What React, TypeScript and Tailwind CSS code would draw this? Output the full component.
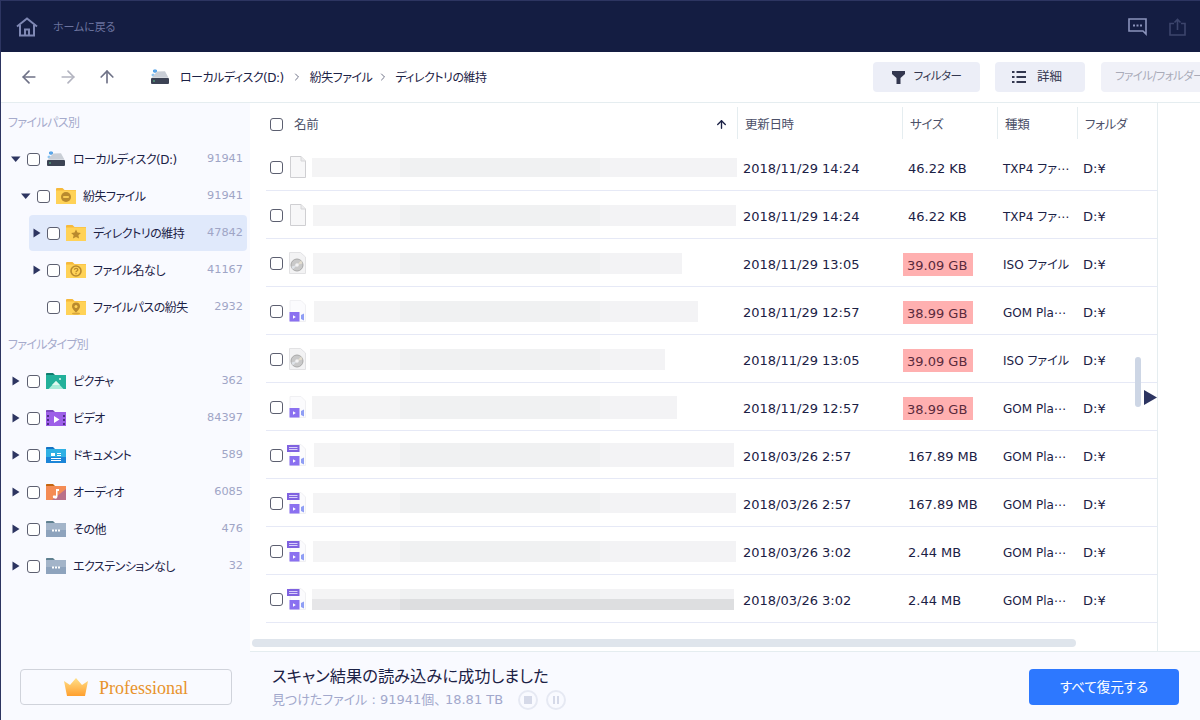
import { ArrowLeft, ArrowRight, ArrowUp, ChevronRight } from "lucide-react";
import type { ReactNode } from "react";

const Check = () => (
  <span className="block h-[13px] w-[13px] shrink-0 rounded-[3px] border border-[#5c5f70] bg-white" />
);

const Tri = ({ dir }: { dir: "down" | "right" | "none" }) => {
  if (dir === "none") return null;
  return (
    <svg width="10" height="10" viewBox="0 0 10 10" className="shrink-0">
      {dir === "down" ? <path d="M0 2.5h9.5L4.7 8z" fill="#2d3561" /> : <path d="M1.5 .5L8.5 5l-7 4.5z" fill="#2d3561" />}
    </svg>
  );
};

const Disk = () => (
  <svg width="20" height="18" viewBox="0 0 20 18" className="shrink-0">
    <path d="M5 1.2l2 .8v2L5 5 3 4V2z" fill="#5ba6e8" />
    <path d="M3 5.5l1.6.7v1.6L3 8.5 1.6 7.8V6.2z" fill="#8cc4f0" />
    <path d="M7 3.5l8-.2 3.5 6.5H1.5L5 6z" fill="#c9ced6" />
    <rect x="1" y="10" width="18" height="6" rx="1" fill="#3c4354" />
    <rect x="3" y="12.5" width="2" height="1" fill="#58c08a" />
  </svg>
);

const YellowFolder = ({ children }: { children: ReactNode }) => (
  <svg width="20" height="16" viewBox="0 0 20 16" className="shrink-0">
    <path d="M0 1.2C0 .5.5 0 1.2 0h5.3L8.5 2H20v2H0z" fill="#f6b93b" />
    <rect y="2.5" width="20" height="13.5" fill="#ffd257" />
    {children}
  </svg>
);

const MinusFolder = () => (
  <YellowFolder>
    <circle cx="10" cy="9" r="5" fill="#b98a2e" />
    <rect x="7.2" y="8.1" width="5.6" height="1.8" fill="#ffd257" />
  </YellowFolder>
);
const StarFolder = () => (
  <YellowFolder>
    <path d="M10 4.5l1.5 3.1 3.4.4-2.5 2.3.7 3.3-3.1-1.7-3.1 1.7.7-3.3L5.1 8l3.4-.4z" fill="#b98a2e" />
  </YellowFolder>
);
const HelpFolder = () => (
  <YellowFolder>
    <circle cx="10" cy="9" r="5" fill="none" stroke="#b98a2e" strokeWidth="1.6" />
    <path d="M8.4 7.8c.2-2 3.4-1.9 3.4 0 0 1.3-1.8 1.2-1.8 2.5" fill="none" stroke="#b98a2e" strokeWidth="1.3" />
    <rect x="9.4" y="11" width="1.2" height="1.2" fill="#b98a2e" />
  </YellowFolder>
);
const PinFolder = () => (
  <YellowFolder>
    <path d="M10 3.5a4 4 0 014 4c0 2.5-4 6-4 6s-4-3.500-4-6a4 4 0 014-4z" fill="#b98a2e" />
    <circle cx="10" cy="7.500" r="1.500" fill="#ffd257" />
    <ellipse cx="10" cy="14.500" rx="4" ry="1" fill="#d9a63c" />
  </YellowFolder>
);

const PictureFolder = () => (
  <svg width="20" height="16" viewBox="0 0 20 16" className="shrink-0">
    <path d="M0 1c0-.6.4-1 1-1h6l2 2h11v2H0z" fill="#0f7d6e" />
    <rect y="2" width="20" height="14" fill="#22b09a" />
    <path d="M2.500 16l7.500-8 7.500 8z" fill="#a9ecd9" />
    <path d="M6 12l4-4 4 4z" fill="#dff8ef" />
    <circle cx="14" cy="6" r="1" fill="#dff8ef" />
  </svg>
);
const VideoFolder = () => (
  <svg width="20" height="16" viewBox="0 0 20 16" className="shrink-0">
    <path d="M0 1c0-.6.4-1 1-1h6l2 2h11v2H0z" fill="#7c48bf" />
    <rect y="2" width="20" height="14" fill="#9d5fe8" />
    <path d="M1 5h2v2H1zm0 4h2v2H1zm0 4h2v2H1zm16-8h2v2h-2zm0 4h2v2h-2zm0 4h2v2h-2z" fill="#4e2d86" />
    <path d="M8 6l5.500 3.500L8 13z" fill="#fff" />
  </svg>
);
const DocFolder = () => (
  <svg width="20" height="16" viewBox="0 0 20 16" className="shrink-0">
    <path d="M0 1c0-.6.4-1 1-1h6l2 2h11v2H0z" fill="#1472c4" />
    <rect y="2" width="20" height="14" fill="#2fb0e4" />
    <rect y="10" width="20" height="6" fill="#1c85d8" />
    <path d="M5 6h4v3H5zm6 0h4v1h-4zm0 2h4v1h-4zm-6 3h10v1H5zm0 2h10v1H5z" fill="#fff" />
  </svg>
);
const AudioFolder = () => (
  <svg width="20" height="16" viewBox="0 0 20 16" className="shrink-0">
    <path d="M0 1c0-.6.4-1 1-1h6l2 2h11v2H0z" fill="#c4650f" />
    <rect y="2" width="20" height="14" fill="#f48c55" />
    <path d="M20 5v11H6z" fill="#b9708a" />
    <path d="M10 5h3v2h-1.500v5.500A2.300 2.300 0 117 11.700c.9-.4 2-.5 3 .1z" fill="#fff" />
  </svg>
);
const GrayFolder = () => (
  <svg width="20" height="16" viewBox="0 0 20 16" className="shrink-0">
    <path d="M0 1c0-.6.4-1 1-1h6l2 2h11v2H0z" fill="#5f8090" />
    <rect y="2" width="20" height="14" fill="#a3b4c9" />
    <rect y="9" width="20" height="7" fill="#8ea3bd" />
    <path d="M6 8.500h2v2H6zm3 0h2v2H9zm3 0h2v2h-2z" fill="#fff" />
  </svg>
);

const Crown = () => (
  <svg width="24" height="18" viewBox="0 0 24 18">
    <defs>
      <linearGradient id="crownFill" x1="0" y1="0" x2="0" y2="1">
        <stop offset="0" stopColor="#ffe08a" />
        <stop offset="1" stopColor="#ff9f2e" />
      </linearGradient>
    </defs>
    <path d="M0 3l6 4 6-7 6 7 6-4-3 15H3z" fill="url(#crownFill)" />
  </svg>
);

const BlankFile = () => (
  <svg width="16" height="22" viewBox="0 0 16 22" className="shrink-0">
    <path d="M.5.500h10.500l4.500 4.500v16.500H.5z" fill="#f7f7f8" stroke="#cfcfd2" />
    <path d="M11 .5V5h4.500" fill="#ececee" stroke="#d6d6d8" />
  </svg>
);
const DiscFile = () => (
  <svg width="17" height="22" viewBox="0 0 17 22" className="shrink-0">
    <path d="M.5.500h11L16.500 5v16.500H.5z" fill="#f3f3f4" stroke="#e2e2e4" />
    <circle cx="8" cy="13" r="6" fill="#c9c9c9" stroke="#a9a9a9" />
    <path d="M8 13l4-4.500a6 6 0 011.500 3z" fill="#e3ded0" />
    <path d="M8 13l-4 4.500a6 6 0 01-1.500-3z" fill="#dfe3e8" />
    <circle cx="8" cy="13" r="1.800" fill="#f3f3f4" />
  </svg>
);
const VideoFile = ({ badge }: { badge?: boolean }) => (
  <svg width="19" height="22" viewBox="0 0 19 22" className="shrink-0">
    <path d="M3 .5h11l4.500 4.500v16.500H3z" fill="#fbfbfd" stroke="#f0f0f3" />
    <rect x="2.500" y="12" width="10" height="9.500" fill="#8a70f0" />
    <path d="M6 15.300l2.800 1.700L6 18.700z" fill="#fff" />
    <path d="M14 15l3-1.500v7L14 19z" fill="#8f9ef5" />
    {badge && (
      <>
        <rect x="0" y="1" width="12.500" height="7" fill="#7f62e0" />
        <path d="M2 3h8.500v1H2zm0 2h8.500v1H2z" fill="#d9d0fa" />
      </>
    )}
  </svg>
);

type Tree = { level: 0 | 1 | 2; arrow: "down" | "right" | "none"; icon: ReactNode; label: string; count: string; active?: boolean };

const pathTree: Tree[] = [
  { level: 0, arrow: "down", icon: <Disk />, label: "ローカルディスク(D:)", count: "91941" },
  { level: 1, arrow: "down", icon: <MinusFolder />, label: "紛失ファイル", count: "91941" },
  { level: 2, arrow: "right", icon: <StarFolder />, label: "ディレクトリの維持", count: "47842", active: true },
  { level: 2, arrow: "right", icon: <HelpFolder />, label: "ファイル名なし", count: "41167" },
  { level: 2, arrow: "none", icon: <PinFolder />, label: "ファイルパスの紛失", count: "2932" },
];

const typeTree: Tree[] = [
  { level: 0, arrow: "right", icon: <PictureFolder />, label: "ピクチャ", count: "362" },
  { level: 0, arrow: "right", icon: <VideoFolder />, label: "ビデオ", count: "84397" },
  { level: 0, arrow: "right", icon: <DocFolder />, label: "ドキュメント", count: "589" },
  { level: 0, arrow: "right", icon: <AudioFolder />, label: "オーディオ", count: "6085" },
  { level: 0, arrow: "right", icon: <GrayFolder />, label: "その他", count: "476" },
  { level: 0, arrow: "right", icon: <GrayFolder />, label: "エクステンションなし", count: "32" },
];

function TreeRow({ row }: { row: Tree }) {
  const wrap =
    row.level === 0 ? "ml-[10px] pr-[4px]" : row.level === 1 ? "ml-[20px] pr-[4px]" : "ml-[28px] pl-[3px] pr-[4px]";
  return (
    <div className={`mb-px flex h-9 items-center rounded-[4px] ${wrap} ${row.active ? "bg-[#e0e9fb]" : ""}`}>
      <span className={`flex items-center ${row.level === 2 ? "w-[15px]" : "w-[16px]"}`}>
        <Tri dir={row.arrow} />
      </span>
      <Check />
      <span className="ml-[6px] flex w-[20px] justify-center">{row.icon}</span>
      <span className="ml-[7px] flex-1 pt-[2px] text-[12px] tracking-[-0.5px] text-[#1b2145]">{row.label}</span>
      <span className="text-[11.300px] text-[#9fa5c6]">{row.count}</span>
    </div>
  );
}

type FileRow = {
  icon: ReactNode;
  x: number;
  w: number;
  h: number;
  date: string;
  size: string;
  big?: boolean;
  type: string;
  dark?: boolean;
};

const files: FileRow[] = [
  { icon: <BlankFile />, x: 6, w: 425, h: 19, date: "2018/11/29 14:24", size: "46.22 KB", type: "TXP4 ファ⋯" },
  { icon: <BlankFile />, x: 7, w: 423, h: 21, date: "2018/11/29 14:24", size: "46.22 KB", type: "TXP4 ファ⋯" },
  { icon: <DiscFile />, x: 7, w: 369, h: 21, date: "2018/11/29 13:05", size: "39.09 GB", big: true, type: "ISO ファイル" },
  { icon: <VideoFile />, x: 8, w: 384, h: 21, date: "2018/11/29 12:57", size: "38.99 GB", big: true, type: "GOM Pla⋯" },
  { icon: <DiscFile />, x: 4, w: 355, h: 21, date: "2018/11/29 13:05", size: "39.09 GB", big: true, type: "ISO ファイル" },
  { icon: <VideoFile />, x: 6, w: 365, h: 23, date: "2018/11/29 12:57", size: "38.99 GB", big: true, type: "GOM Pla⋯" },
  { icon: <VideoFile badge />, x: 8, w: 420, h: 24, date: "2018/03/26 2:57", size: "167.89 MB", type: "GOM Pla⋯" },
  { icon: <VideoFile badge />, x: 7, w: 423, h: 20, date: "2018/03/26 2:57", size: "167.89 MB", type: "GOM Pla⋯" },
  { icon: <VideoFile badge />, x: 7, w: 423, h: 21, date: "2018/03/26 3:02", size: "2.44 MB", type: "GOM Pla⋯" },
  { icon: <VideoFile badge />, x: 6, w: 422, h: 21, date: "2018/03/26 3:02", size: "2.44 MB", type: "GOM Pla⋯", dark: true },
];

function Blur({ row }: { row: FileRow }) {
  const first = 94 - row.x;
  return (
    <div className="relative overflow-hidden" style={{ marginLeft: row.x, width: row.w, height: row.h }}>
      <div className="flex h-full">
        <div className="shrink-0 bg-[#f4f4f5]" style={{ width: first }} />
        <div className="w-[200px] shrink-0 bg-[#f0f1f2]" />
        <div className="flex-1 bg-[#f3f3f5]" />
      </div>
      {row.dark && (
        <div className="absolute inset-x-0 bottom-0 flex h-[11px]">
          <div className="shrink-0 bg-[#e6e6e8]" style={{ width: first }} />
          <div className="flex-1 bg-[#dddee0]" />
        </div>
      )}
    </div>
  );
}

const gridCols = "grid grid-cols-[471px_165px_95px_80px_64px]";

export default function App() {
  return (
    <div className="flex h-[720px] w-[1200px] flex-col overflow-hidden border-l border-[#2d3561] bg-white text-[13px] text-[#1b2145] [font-family:'DejaVu_Sans','Noto_Sans_CJK_JP',sans-serif] [font-feature-settings:'palt']">
      {/* title bar */}
      <header className="flex h-[52px] shrink-0 items-center border-t border-[#2d3561] bg-[#141d42] pl-[15px] pr-[14px]">
        <svg width="22" height="20" viewBox="0 0 22 20" fill="none" stroke="#7f88b4" strokeWidth="2">
          <path d="M1 9.500L11 1.500l10 8" />
          <path d="M4 8v10.500h14V8" />
          <path d="M9 18.500v-6h4v6" />
        </svg>
        <span className="ml-[15px] pt-[3px] text-[11px] tracking-[-0.1px] text-[#6b739e]">ホームに戻る</span>
        <div className="flex-1" />
        <svg width="19" height="18" viewBox="0 0 19 18" fill="none">
          <path d="M1 1h17v15l-3-3H1z" stroke="#8b94bc" strokeWidth="1.600" />
          <path d="M5 6.500h2v2H5zm3.500 0h2v2h-2zm3.500 0h2v2h-2z" fill="#8b94bc" />
        </svg>
        <svg width="17" height="18" viewBox="0 0 17 18" fill="none" stroke="#3c456c" strokeWidth="1.600" className="ml-[22px]">
          <path d="M5 5.500H1v11.500h15V5.500h-4" />
          <path d="M8.500 12V1.500M5.500 4.500l3-3 3 3" />
        </svg>
      </header>

      {/* toolbar */}
      <div className="flex h-[51px] shrink-0 items-center border-b border-[#e5edf0] pl-[18px]">
        <ArrowLeft size={20} strokeWidth={2} className="text-[#6f7287]" />
        <ArrowRight size={20} strokeWidth={2} className="ml-[19px] text-[#b3b4c0]" />
        <ArrowUp size={20} strokeWidth={2} className="ml-[19px] text-[#6f7287]" />
        <div className="ml-[33px] flex items-center text-[12px] tracking-[-0.5px]">
          <Disk />
          <span className="ml-[10px] pt-[2px]">ローカルディスク(D:)</span>
          <ChevronRight size={12} className="ml-[7px] mr-[7px] text-[#6f7287]" />
          <span className="pt-[2px]">紛失ファイル</span>
          <ChevronRight size={12} className="ml-[5px] mr-[6px] text-[#6f7287]" />
          <span className="pt-[2px]">ディレクトリの維持</span>
        </div>
        <div className="flex-1" />
        <button className="flex h-[30px] w-[107px] items-center justify-center rounded-[4px] bg-[#eceef7] text-[11.500px] tracking-[-0.5px] text-[#33374f]">
          <svg width="13" height="13" viewBox="0 0 13 13" className="mr-[9px]">
            <path d="M0 0h13v3L8.500 7v6h-4V7L0 3z" fill="#33374f" />
          </svg>
          フィルター
        </button>
        <button className="ml-[15px] flex h-[30px] w-[90px] items-center justify-center rounded-[4px] bg-[#eceef7] pr-[6px] text-[12.500px] text-[#33374f]">
          <svg width="14" height="12" viewBox="0 0 14 12" className="mr-[11px]" fill="#33374f">
            <path d="M0 0h2.500v2H0zm4.500 0H14v2H4.500zM0 5h2.500v2H0zm4.500 0H14v2H4.500zM0 10h2.500v2H0zm4.500 0H14v2H4.500z" />
          </svg>
          詳細
        </button>
        <div className="ml-[16px] flex h-[30px] w-[99px] shrink-0 items-center whitespace-nowrap rounded-l-[4px] bg-[#f0f1f8] pl-[14px] text-[11.500px] tracking-[-0.6px] text-[#a9abb8]">
          ファイル/フォルダー
        </div>
      </div>

      <div className="flex min-h-0 flex-1">
        {/* side panel */}
        <aside className="flex w-[249px] shrink-0 flex-col bg-[#f9faff] pt-[11px] pr-[3px]">
          <div className="mb-[9px] ml-[7px] h-[18px] text-[12px] leading-[18px] tracking-[-0.6px] text-[#a6abcc]">ファイルパス別</div>
          {pathTree.map((r) => (
            <TreeRow key={r.label} row={r} />
          ))}
          <div className="mt-[10px] mb-[9px] ml-[7px] h-[18px] text-[12px] leading-[18px] tracking-[-0.7px] text-[#a6abcc]">ファイルタイプ別</div>
          {typeTree.map((r) => (
            <TreeRow key={r.label} row={r} />
          ))}
          <div className="flex-1" />
          <button className="mb-[15px] ml-[19px] flex h-[36px] w-[212px] items-center rounded-[4px] border border-[#d0d3db] pl-[43px]">
            <Crown />
            <span className="ml-[11px] pt-[2px] text-[18px] text-[#e8932c] [font-family:'Liberation_Serif',serif]">Professional</span>
          </button>
        </aside>

        <div className="flex min-w-0 flex-1 flex-col">
          <div className="flex min-h-0 flex-1">
            {/* file table */}
            <div className="relative w-[907px] shrink-0">
              <div className={`${gridCols} ml-[16px] h-[40px] text-[12.500px] tracking-[-0.3px] text-[#4c5068]`}>
                <div className="flex items-center pl-[4px] pt-[2px]">
                  <Check />
                  <span className="ml-[11px] pt-[2px]">名前</span>
                  <ArrowUp size={13} strokeWidth={2.500} className="ml-auto mr-[9px] text-[#1b2145]" />
                </div>
                {["更新日時", "サイズ", "種類", "フォルダ"].map((h) => (
                  <div key={h} className="my-[4px] flex items-center border-l border-[#e5edf0] pl-[7px] pt-[4px]">
                    {h}
                  </div>
                ))}
              </div>
              <div className="ml-[16px]">
                {files.map((f, i) => (
                  <div key={i} className={`${gridCols} h-[48px] items-center border-b border-[#e6e9f6] pt-[1px]`}>
                    <div className="flex items-center pl-[4px]">
                      <Check />
                      <span className="ml-[7px] flex w-[16px] justify-end">{f.icon}</span>
                      <Blur row={f} />
                    </div>
                    <div className="pl-[6px] pt-[4px]">{f.date}</div>
                    {f.big ? (
                      <div className="pl-[5px] pt-[2px]">
                        <span className="-ml-[4px] inline-block h-[23px] w-[70px] bg-[#ffb0b0] pl-[4px] leading-[25px] text-[#5a2a3c]">
                          {f.size}
                        </span>
                      </div>
                    ) : (
                      <div className="pl-[6px] pt-[4px]">{f.size}</div>
                    )}
                    <div className="whitespace-nowrap pl-[6px] pt-[4px] text-[12px]">{f.type}</div>
                    <div className="pl-[6px] pt-[4px]">D:¥</div>
                  </div>
                ))}
              </div>
              <div className="absolute left-[2px] top-[536px] h-[8px] w-[824px] rounded-[4px] bg-[#dfe5ec]" />
              <div className="absolute left-[885px] top-[254px] h-[50px] w-[6px] rounded-[3px] bg-[#cdd6e5]" />
              <svg width="13" height="15" viewBox="0 0 13 15" className="absolute left-[894px] top-[287px]">
                <path d="M0 0l13 7.500L0 15z" fill="#2d3561" />
              </svg>
            </div>
            <div className="flex-1 border-l border-[#e5edf0]" />
          </div>

          {/* status bar */}
          <footer className="flex h-[69px] shrink-0 items-center border-t border-[#e5edf0] bg-[#f9faff] pl-[22px] pr-[21px] pt-[2px]">
            <div className="pt-[2px]">
              <div className="text-[16.300px] leading-[24px] text-[#1b2145]">スキャン結果の読み込みに成功しました</div>
              <div className="flex h-[22px] items-center text-[13px] text-[#a2a8cc]">
                <span className="whitespace-pre">見つけたファイル : 91941個、 18.81 TB</span>
                <span className="ml-[15px] flex h-[20px] w-[20px] items-center justify-center rounded-full border-2 border-[#e6e9f3]">
                  <span className="h-[8px] w-[8px] bg-[#d5d9e8]" />
                </span>
                <span className="ml-[8px] flex h-[20px] w-[20px] items-center justify-center gap-[2px] rounded-full border-2 border-[#e6e9f3]">
                  <span className="h-[8px] w-[2px] bg-[#d5d9e8]" />
                  <span className="h-[8px] w-[2px] bg-[#d5d9e8]" />
                </span>
              </div>
            </div>
            <button className="ml-auto h-[36px] w-[150px] rounded-[4px] bg-[#2d78ff] text-[13.500px] text-white">すべて復元する</button>
          </footer>
        </div>
      </div>
    </div>
  );
}
